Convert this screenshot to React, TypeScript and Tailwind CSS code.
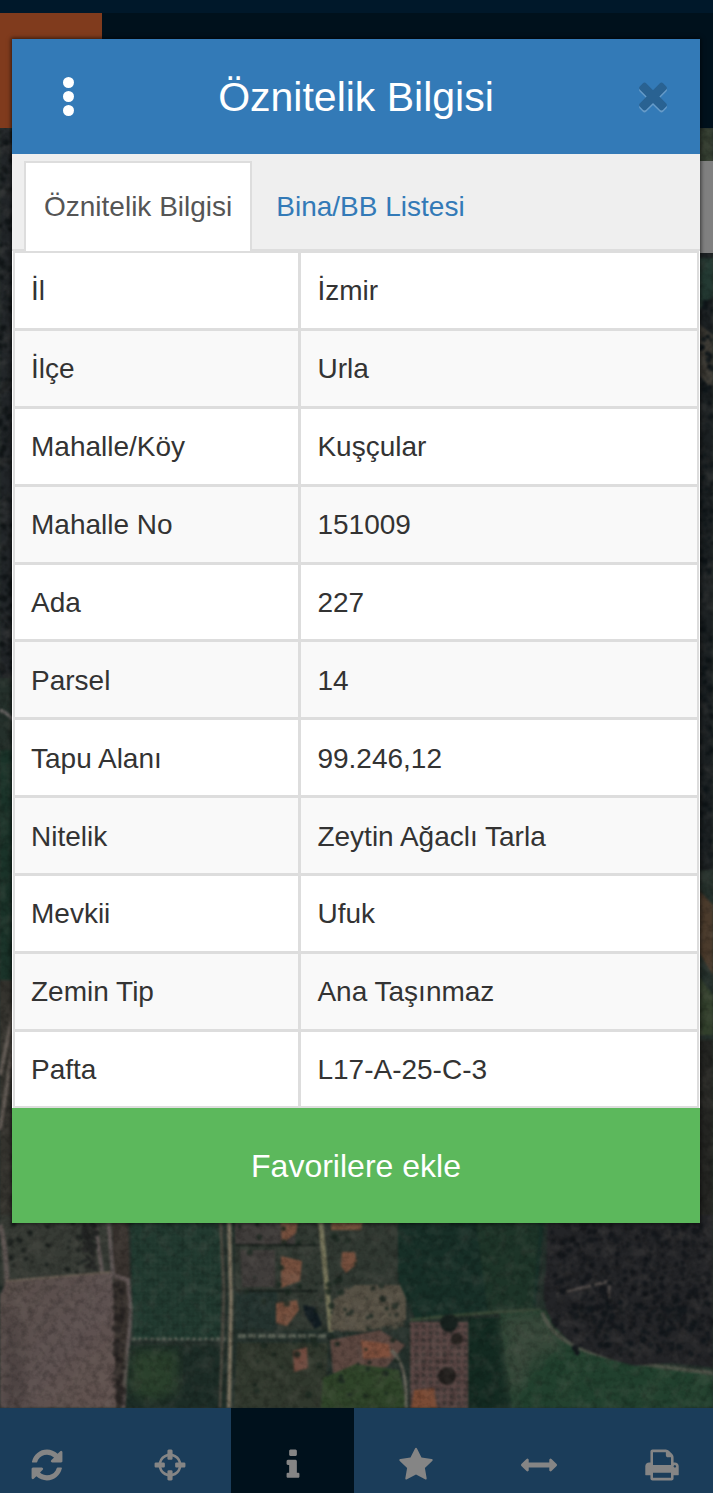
import type { ReactNode } from "react";

const rows: [string, string][] = [
  ["İl", "İzmir"],
  ["İlçe", "Urla"],
  ["Mahalle/Köy", "Kuşçular"],
  ["Mahalle No", "151009"],
  ["Ada", "227"],
  ["Parsel", "14"],
  ["Tapu Alanı", "99.246,12"],
  ["Nitelik", "Zeytin Ağaclı Tarla"],
  ["Mevkii", "Ufuk"],
  ["Zemin Tip", "Ana Taşınmaz"],
  ["Pafta", "L17-A-25-C-3"],
];

const paths = {
  refresh:
    "M1639 1056q0 5-1 7-64 268-268 434.5t-478 166.5q-146 0-282.5-55t-243.5-157l-129 129q-19 19-45 19t-45-19-19-45v-448q0-26 19-45t45-19h448q26 0 45 19t19 45-19 45l-137 137q71 66 161 102t187 36q134 0 250-65t186-179q11-17 53-117 8-23 30-23h192q13 0 22.5 9.5t9.5 22.5zm25-800v448q0 26-19 45t-45 19h-448q-26 0-45-19t-19-45 19-45l138-138q-148-137-349-137-134 0-250 65t-186 179q-11 17-53 117-8 23-30 23h-199q-13 0-22.5-9.5t-9.5-22.5v-7q65-268 270-434.5t480-166.5q146 0 284 55.5t245 156.5l130-129q19-19 45-19t45 19 19 45z",
  crosshairs:
    "M1325 1024h-109q-26 0-45-19t-19-45v-128q0-26 19-45t45-19h109q-32-108-112.5-188.5t-188.5-112.5v109q0 26-19 45t-45 19h-128q-26 0-45-19t-19-45v-109q-108 32-188.5 112.5t-112.5 188.5h109q26 0 45 19t19 45v128q0 26-19 45t-45 19h-109q32 108 112.5 188.5t188.5 112.5v-109q0-26 19-45t45-19h128q26 0 45 19t19 45v109q108-32 188.5-112.5t112.5-188.5zm339-192v128q0 26-19 45t-45 19h-143q-37 161-154.5 278.5t-278.5 154.5v143q0 26-19 45t-45 19h-128q-26 0-45-19t-19-45v-143q-161-37-278.5-154.5t-154.5-278.5h-143q-26 0-45-19t-19-45v-128q0-26 19-45t45-19h143q37-161 154.5-278.5t278.5-154.5v-143q0-26 19-45t45-19h128q26 0 45 19t19 45v143q161 37 278.5 154.5t154.5 278.5h143q26 0 45 19t19 45z",
  info: "M1216 1344v128q0 26-19 45t-45 19h-512q-26 0-45-19t-19-45v-128q0-26 19-45t45-19h64v-384h-64q-26 0-45-19t-19-45v-128q0-26 19-45t45-19h384q26 0 45 19t19 45v576h64q26 0 45 19t19 45zm-128-1152v192q0 26-19 45t-45 19h-256q-26 0-45-19t-19-45v-192q0-26 19-45t45-19h256q26 0 45 19t19 45z",
  star: "M1728 647q0 22-26 48l-363 354 86 500q1 7 1 20 0 21-10.5 35.5t-30.5 14.5q-19 0-40-12l-449-236-449 236q-22 12-40 12-21 0-31.5-14.5t-10.5-35.5q0-6 2-20l86-500-364-354q-25-27-25-48 0-37 56-46l502-73 225-455q19-41 49-41t49 41l225 455 502 73q56 9 56 46z",
  arrows:
    "M1792 896q0 26-19 45l-256 256q-19 19-45 19t-45-19-19-45v-128h-1024v128q0 26-19 45t-45 19-45-19l-256-256q-19-19-19-45t19-45l256-256q19-19 45-19t45 19 19 45v128h1024v-128q0-26 19-45t45-19 45 19l256 256q19 19 19 45z",
  print:
    "M448 1536h896v-256h-896v256zm0-640h896v-384h-160q-40 0-68-28t-28-68v-160h-640v640zm1152 64q0-26-19-45t-45-19-45 19-19 45 19 45 45 19 45-19 19-45zm128 0v416q0 13-9.5 22.5t-22.5 9.5h-224v160q0 40-28 68t-68 28h-960q-40 0-68-28t-28-68v-160h-224q-13 0-22.5-9.5t-9.5-22.5v-416q0-79 56.5-135.5t135.5-56.5h64v-544q0-40 28-68t68-28h672q40 0 88 20t76 48l152 152q28 28 48 76t20 88v256h64q79 0 135.5 56.5t56.5 135.5z",
  times:
    "M1490 1322q0 40-28 68l-136 136q-28 28-68 28t-68-28l-294-294-294 294q-28 28-68 28t-68-28l-136-136q-28-28-28-68t28-68l294-294-294-294q-28-28-28-68t28-68l136-136q28-28 68-28t68 28l294 294 294-294q28-28 68-28t68 28l136 136q28 28 28 68t-28 68l-294 294 294 294q28 28 28 68z",
};

const tools: { label: string; icon: keyof typeof paths; active?: boolean }[] = [
  { label: "Yenile", icon: "refresh" },
  { label: "Konum", icon: "crosshairs" },
  { label: "Bilgi", icon: "info", active: true },
  { label: "Favoriler", icon: "star" },
  { label: "Ölçüm", icon: "arrows" },
  { label: "Yazdır", icon: "print" },
];

function Glyph({ name, className }: { name: keyof typeof paths; className: string }) {
  return (
    <svg viewBox="0 0 1792 1792" fill="currentColor" aria-hidden="true" className={className}>
      <path d={paths[name]} />
    </svg>
  );
}

function scatter(seed: number, count: number, x: number, y: number, w: number, h: number) {
  let s = seed;
  const next = () => {
    s = (s * 16807) % 2147483647;
    return s / 2147483647;
  };
  return Array.from({ length: count }, () => ({ x: x + next() * w, y: y + next() * h, r: 1 + next() * 2.4 }));
}

function Trees({ dots, fill, opacity = 1 }: { dots: { x: number; y: number; r: number }[]; fill: string; opacity?: number }) {
  return (
    <g fill={fill} opacity={opacity}>
      {dots.map((d, i) => (
        <circle key={i} cx={d.x} cy={d.y} r={d.r} />
      ))}
    </g>
  );
}

function SatelliteMap(): ReactNode {
  return (
    <svg viewBox="0 128 713 1280" preserveAspectRatio="xMidYMax slice" aria-hidden="true" className="absolute inset-0 h-full w-full">
      <defs>
        <filter id="grain" x="0" y="0" width="100%" height="100%" colorInterpolationFilters="sRGB">
          <feTurbulence type="fractalNoise" baseFrequency="0.14" numOctaves="3" seed="7" />
          <feColorMatrix values="0 0 0 0 0  0 0 0 0 0  0 0 0 0 0  2.2 0 0 0 -0.9" />
        </filter>
        <filter id="light" x="0" y="0" width="100%" height="100%" colorInterpolationFilters="sRGB">
          <feTurbulence type="fractalNoise" baseFrequency="0.07" numOctaves="3" seed="21" />
          <feColorMatrix values="0 0 0 0 .5  0 0 0 0 .47  0 0 0 0 .44  0 2 0 0 -0.9" />
        </filter>
        <filter id="soft" colorInterpolationFilters="sRGB">
          <feGaussianBlur stdDeviation="0.9" />
        </filter>
        <filter id="haze" colorInterpolationFilters="sRGB">
          <feGaussianBlur stdDeviation="6" />
        </filter>
        <pattern id="rowsGreen" width="5" height="6" patternUnits="userSpaceOnUse">
          <path d="M0 0V6M0 0H5" stroke="#40534a" strokeWidth="1" opacity=".4" />
        </pattern>
        <pattern id="orchard" width="7" height="7" patternUnits="userSpaceOnUse">
          <circle cx="3.500" cy="3.500" r="2.200" fill="#2a2b29" />
        </pattern>
        <linearGradient id="soil" x1="0" x2="1" y2="1">
          <stop offset="0" stopColor="#584d49" />
          <stop offset=".5" stopColor="#5d5150" />
          <stop offset="1" stopColor="#62534f" />
        </linearGradient>
      </defs>
      <rect y="128" width="713" height="1280" fill="#24302b" />
      <g filter="url(#soft)">
        <rect y="128" width="20" height="550" fill="#222629" />
        <path d="M0 710q9 3 20 18" stroke="#6b6867" strokeWidth="3" fill="none" />
        <rect y="750" width="20" height="230" fill="#1a3329" />
        <rect y="980" width="20" height="240" fill="#34332e" />
        <path d="M0 1130L20 1000M0 1075l16-75" stroke="#625b55" strokeWidth="4" />
        <rect x="690" y="128" width="23" height="50" fill="#343e31" />
        <rect x="690" y="250" width="23" height="620" fill="#1b2022" />
        <path d="M694 258h19v38l-19 18z" fill="#243a33" />
        <path d="M694 320l19 15v55l-19-20z" fill="#3b3933" />
        <path d="M694 885l19 20v70l-19-30z" fill="#4b3b2c" />
        <path d="M694 970l19 25v40h-19z" fill="#32402c" />
        <rect x="690" y="1040" width="23" height="190" fill="#242522" />

        <path d="M0 1215H112V1280L0 1286Z" fill="#373b35" />
        <path d="M0 1225q7 25 7 65" stroke="#5d5552" strokeWidth="5" fill="none" />
        <path d="M6 1281L112 1272L124 1408H0V1295Z" fill="url(#soil)" />
        <path d="M4 1320q10-20 16 20t6 68H6z" fill="#4d4342" filter="url(#haze)" />
        <path d="M6 1281L112 1272" stroke="#6a5f54" strokeWidth="2" />
        <path d="M112 1215H128L130 1280L126 1408H116Z" fill="#39332f" />
        <path d="M94 1215l8 57M108 1215l5 60 15 5 3 30-8 98" stroke="#6d6261" strokeWidth="4" fill="none" opacity=".75" />
        <path d="M131 1215H222L220 1340H133Z" fill="#1f382e" />
        <path d="M131 1215H222L220 1340H133Z" fill="url(#rowsGreen)" />
        <path d="M130 1346H224V1408H126Z" fill="#1c2c26" />
        <path d="M133 1350h45v42l-28 10-22-12z" fill="#2a402c" filter="url(#haze)" />
        <path d="M132 1339H226" stroke="#656b60" strokeWidth="3" strokeDasharray="4 2" opacity=".8" />
        <path d="M229 1215L231 1300L229 1408" stroke="#7a7260" strokeWidth="4" fill="none" />
        <path d="M220 1215L224 1290L220 1408" stroke="#4b4940" strokeWidth="3" fill="none" />

        <path d="M235 1215H400V1330H235Z" fill="#303831" />
        <path d="M235 1215h60v29h-60zM240 1250h35v37h-33z" fill="#403d3b" />
        <path d="M235 1290h42v40h-42z" fill="#24332f" />
        <path d="M236 1245H320M236 1291H318" stroke="#151d19" strokeWidth="2" />
        <path d="M280 1215h19l-3 18-14 11zM281 1256l21 5-2 20-19 7zM276 1303l21-3 2 10-12 16-11-3zM342 1252h13l2 12-11 9-5-7zM353 1300l17-2 5 14-20 10z" fill="#76503e" />
        <path d="M332 1215h32l-3 15h-30z" fill="#75523d" />
        <path d="M320 1215L331 1332" stroke="#76755a" strokeWidth="5" />
        <path d="M238 1336H328" stroke="#676d5f" strokeWidth="4" strokeDasharray="8 2" opacity=".8" />
        <path d="M237 1343H328L325 1408H234Z" fill="#30382d" />
        <path d="M330 1340l50-10 25 15-18 22-54 6z" fill="#5c4740" />
        <path d="M355 1285H406V1320L365 1332L330 1330L333 1300Z" fill="#555044" />
        <path d="M293 1351l14-4 1 21-14 4z" fill="#704a3e" />
        <path d="M361 1340l28 4 2 13-28 2z" fill="#80503d" />
        <path d="M323 1378l33-14 43 6 9 38h-87z" fill="#2f4429" />
        <path d="M391 1350q17 14 15 58" stroke="#67655a" strokeWidth="3" fill="none" />

        <path d="M398 1215H545L535 1312L415 1318L398 1280Z" fill="#172f27" />
        <path d="M475 1215H540L532 1312H488Z" fill="#1d3428" />
        <path d="M410 1322H468V1408H410Z" fill="#5b4745" />
        <path d="M410 1322H468V1408H410Z" fill="url(#orchard)" opacity=".55" />
        <path d="M414 1390l20-2 3 20h-26z" fill="#7b4b35" />
        <path d="M469 1318H502L514 1408H469Z" fill="#132a21" />
        <path d="M410 1320Q480 1312 540 1310" stroke="#394936" strokeWidth="3" fill="none" />
        <path d="M500 1314L545 1310Q570 1346 625 1362L713 1372V1408H512Z" fill="#21402e" />
        <path d="M500 1314l42-2 25 33-30 14-27 45z" fill="#37483a" filter="url(#haze)" />
        <path d="M560 1405l30-65M640 1408l30-45M690 1408l20-40" stroke="#2d4936" strokeWidth="7" filter="url(#haze)" />
        <path d="M542 1312Q552 1340 590 1352T713 1373" stroke="#4c5247" strokeWidth="4" fill="none" />
        <path d="M548 1215H713V1368Q665 1360 636 1366Q614 1362 575 1345Q535 1318 546 1270Z" fill="#232427" />
        <path d="M557 1294l53-13-2 22" stroke="#4d4846" strokeWidth="3" fill="none" />
        <circle cx="449" cy="1323" r="9" fill="#17211e" />
        <circle cx="447" cy="1376" r="9" fill="#211e1c" />
        <circle cx="457" cy="1339" r="6" fill="#292522" />
        <path d="M303 1305l12 2 7 18-7 4-10-14z" fill="#101b20" />

        <Trees dots={scatter(11, 26, 10, 1222, 72, 50)} fill="#1d221f" />
        <Trees dots={scatter(17, 60, 84, 1224, 12, 44)} fill="#222423" />
        <Trees dots={scatter(19, 60, 114, 1284, 10, 120)} fill="#221f1e" opacity={0.7} />
        <Trees dots={scatter(23, 90, 240, 1222, 160, 175)} fill="#1b2820" opacity={0.8} />
        <Trees dots={scatter(29, 60, 340, 1290, 64, 40)} fill="#625a4d" opacity={0.6} />
        <Trees dots={scatter(31, 320, 552, 1224, 161, 105)} fill="#15181c" />
        <Trees dots={scatter(37, 130, 575, 1300, 138, 55)} fill="#13181c" />
        <Trees dots={scatter(41, 150, 0, 130, 14, 550)} fill="#13181a" />
        <Trees dots={scatter(43, 140, 699, 300, 14, 560)} fill="#10171a" />
      </g>
      <rect y="128" width="713" height="1280" filter="url(#grain)" opacity=".22" />
      <rect y="128" width="713" height="1280" filter="url(#light)" opacity=".2" />
    </svg>
  );
}

export default function App() {
  return (
    <div className="relative flex min-h-screen flex-col overflow-hidden bg-[#00111c] font-['Liberation_Sans',Arial,sans-serif] text-[28px] leading-10 text-[#333]">
      <header className="flex h-32 flex-col">
        <div className="h-[13px] bg-[#00182a]" />
        <div className="flex-1 bg-[#00111c]">
          <div className="h-full w-[102px] bg-[#803b1d]" />
        </div>
      </header>

      <main className="relative flex-1">
        <SatelliteMap />
        <div className="absolute top-[33px] right-0 h-[92px] w-8 bg-[#808080]" />
      </main>

      <nav className="-mr-[10px] -ml-[15px] grid h-[85px] grid-cols-6 bg-[#1b3d5a]">
        {tools.map((tool) => (
          <button
            key={tool.label}
            type="button"
            aria-label={tool.label}
            className={
              tool.active
                ? "flex items-end justify-center bg-[#00111c] pb-[10px] text-[#858585]"
                : "flex items-end justify-center pb-[10px] text-[#858585]"
            }
          >
            <Glyph name={tool.icon} className="size-9" />
          </button>
        ))}
      </nav>

      <section
        role="dialog"
        aria-labelledby="dialog-title"
        className="absolute top-[39px] right-[13px] left-3 flex flex-col bg-white shadow-[0_0_4px_1px_rgba(0,0,0,0.6)]"
      >
        <div className="grid h-[115px] grid-cols-[60px_1fr_60px] items-center bg-[#337ab7] px-[26px] text-white">
          <button type="button" aria-label="Menü" className="flex flex-col items-center gap-[3px]">
            <span className="size-[11px] rounded-full bg-white" />
            <span className="size-[11px] rounded-full bg-white" />
            <span className="size-[11px] rounded-full bg-white" />
          </button>
          <h1 id="dialog-title" className="text-center text-[41px] leading-[48px]">
            Öznitelik Bilgisi
          </h1>
          <button type="button" aria-label="Kapat" className="flex justify-end pb-1 text-[#296292]">
            <Glyph name="times" className="size-[42px] drop-shadow-[0_2px_0_rgba(255,255,255,0.25)]" />
          </button>
        </div>

        <div role="tablist" className="flex h-[97px] items-end border-b-2 border-[#ddd] bg-[#efefef] px-3">
          <button
            type="button"
            role="tab"
            aria-selected="true"
            className="-mb-[2px] h-[90px] border-x-2 border-t-2 border-[#ddd] bg-white px-[18px] text-[#555]"
          >
            Öznitelik Bilgisi
          </button>
          <button
            type="button"
            role="tab"
            aria-selected="false"
            className="-mb-[2px] h-[90px] border-t-2 border-transparent px-6 text-[#337ab7]"
          >
            Bina/BB Listesi
          </button>
        </div>

        <div className="mx-px border-x-2 border-t-2 border-[#ddd]">
          <table className="h-[855px] w-full table-fixed border-separate border-spacing-0 text-left">
            <colgroup>
              <col className="w-[42%]" />
              <col />
            </colgroup>
            <tbody>
              {rows.map(([name, value]) => (
                <tr key={name} className="group even:bg-[#f9f9f9]">
                  <th
                    scope="row"
                    className="border-r-3 border-b-3 border-[#ddd] px-4 pt-0.5 font-normal group-last:border-b-2"
                  >
                    {name}
                  </th>
                  <td className="border-b-3 border-[#ddd] px-4 pt-0.5 group-last:border-b-2">{value}</td>
                </tr>
              ))}
            </tbody>
          </table>
        </div>

        <button type="button" className="h-[115px] bg-[#5cb85c] text-[32px] text-white">
          Favorilere ekle
        </button>
      </section>
    </div>
  );
}
